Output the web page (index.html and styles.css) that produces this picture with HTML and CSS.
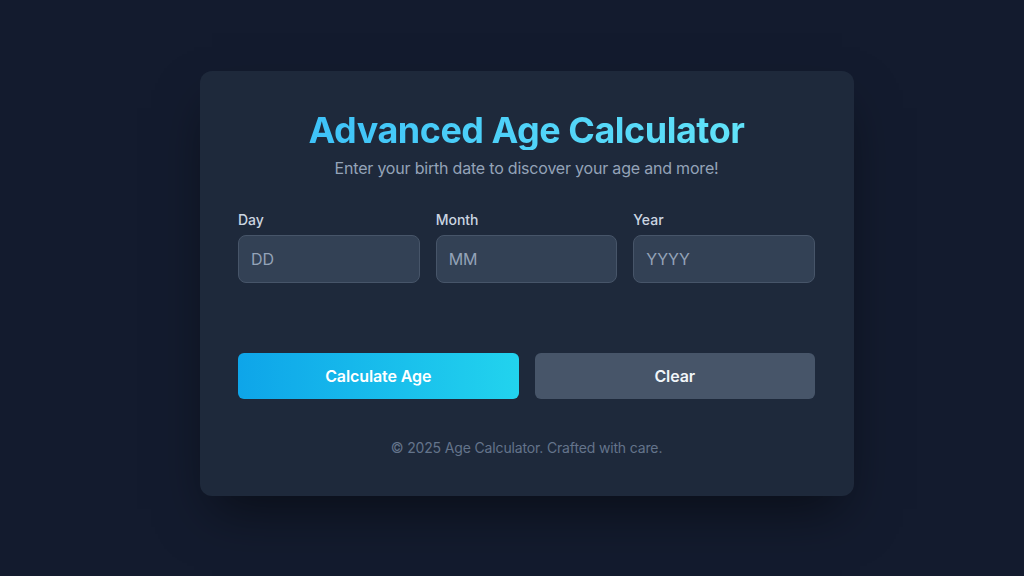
FILE: index.html
```html
<!DOCTYPE html>
<html lang="en">
<head>
<meta charset="utf-8">
<title>Advanced Age Calculator</title>
<link rel="stylesheet" href="styles.css">
</head>
<body>
<main class="page">
  <section class="card">
    <h1 class="title">Advanced Age Calculator</h1>
    <p class="subtitle">Enter your birth date to discover your age and more!</p>
    <div class="fields">
      <label class="field">
        <span class="label">Day</span>
        <input class="input" type="text" placeholder="DD">
      </label>
      <label class="field">
        <span class="label">Month</span>
        <input class="input" type="text" placeholder="MM">
      </label>
      <label class="field">
        <span class="label">Year</span>
        <input class="input" type="text" placeholder="YYYY">
      </label>
    </div>
    <div class="spacer"></div>
    <div class="actions">
      <button class="btn btn-primary" type="button">Calculate Age</button>
      <button class="btn btn-secondary" type="button">Clear</button>
    </div>
    <p class="footer">© 2025 Age Calculator. Crafted with care.</p>
  </section>
</main>
</body>
</html>
```
FILE: styles.css
```css
* { box-sizing: border-box; }
html, body { margin: 0; padding: 0; }
body {
  width: 1024px;
  height: 576px;
  background: #131b2e;
  font-family: Inter, "Noto Sans", sans-serif;
  overflow: hidden;
}
.page {
  height: 576px;
  display: flex;
  justify-content: center;
  padding-top: 71px;
  padding-left: 30px;
}
.card {
  width: 654px;
  height: 425px;
  flex: none;
  background: #1e293b;
  border-radius: 12px;
  padding: 39px 39px 38px 38px;
  box-shadow: 0 25px 50px -12px rgba(0,0,0,0.5);
  display: flex;
  flex-direction: column;
}
.title {
  margin: 0;
  text-align: center;
  font-size: 36px;
  line-height: 40px;
  font-weight: 700;
  letter-spacing: -0.5px;
  background: linear-gradient(90deg, #38bdf8, #67e8f9);
  -webkit-background-clip: text;
  background-clip: text;
  color: transparent;
}
.subtitle {
  margin: 6px 0 0;
  text-align: center;
  font-size: 16px;
  line-height: 24px;
  letter-spacing: -0.2px;
  color: #94a3b8;
}
.fields {
  margin-top: 30px;
  display: grid;
  grid-template-columns: repeat(3, minmax(0, 1fr));
  gap: 16px;
}
.field { display: flex; flex-direction: column; min-width: 0; }
.label {
  font-size: 14px;
  line-height: 20px;
  font-weight: 500;
  color: #cbd5e1;
  margin-bottom: 5px;
}
.input {
  width: 100%;
  min-width: 0;
  height: 48px;
  background: #334155;
  border: 1px solid #475569;
  border-radius: 8px;
  padding: 0 12px;
  font-family: inherit;
  font-size: 16px;
  color: #e2e8f0;
  outline: none;
}
.input::placeholder { color: #94a3b8; }
.spacer { height: 70px; }
.actions {
  display: grid;
  grid-template-columns: repeat(2, minmax(0, 1fr));
  gap: 16px;
}
.btn {
  height: 46px;
  border: none;
  border-radius: 6px;
  font-family: inherit;
  font-size: 16px;
  font-weight: 600;
  letter-spacing: -0.1px;
  color: #ffffff;
  cursor: pointer;
}
.btn-primary { background: linear-gradient(90deg, #0ea5e9, #22d3ee); }
.btn-secondary { background: #475569; color: #f1f5f9; }
.footer {
  margin: 39px 0 0;
  text-align: center;
  font-size: 14px;
  line-height: 20px;
  letter-spacing: -0.15px;
  color: #64748b;
}
```
